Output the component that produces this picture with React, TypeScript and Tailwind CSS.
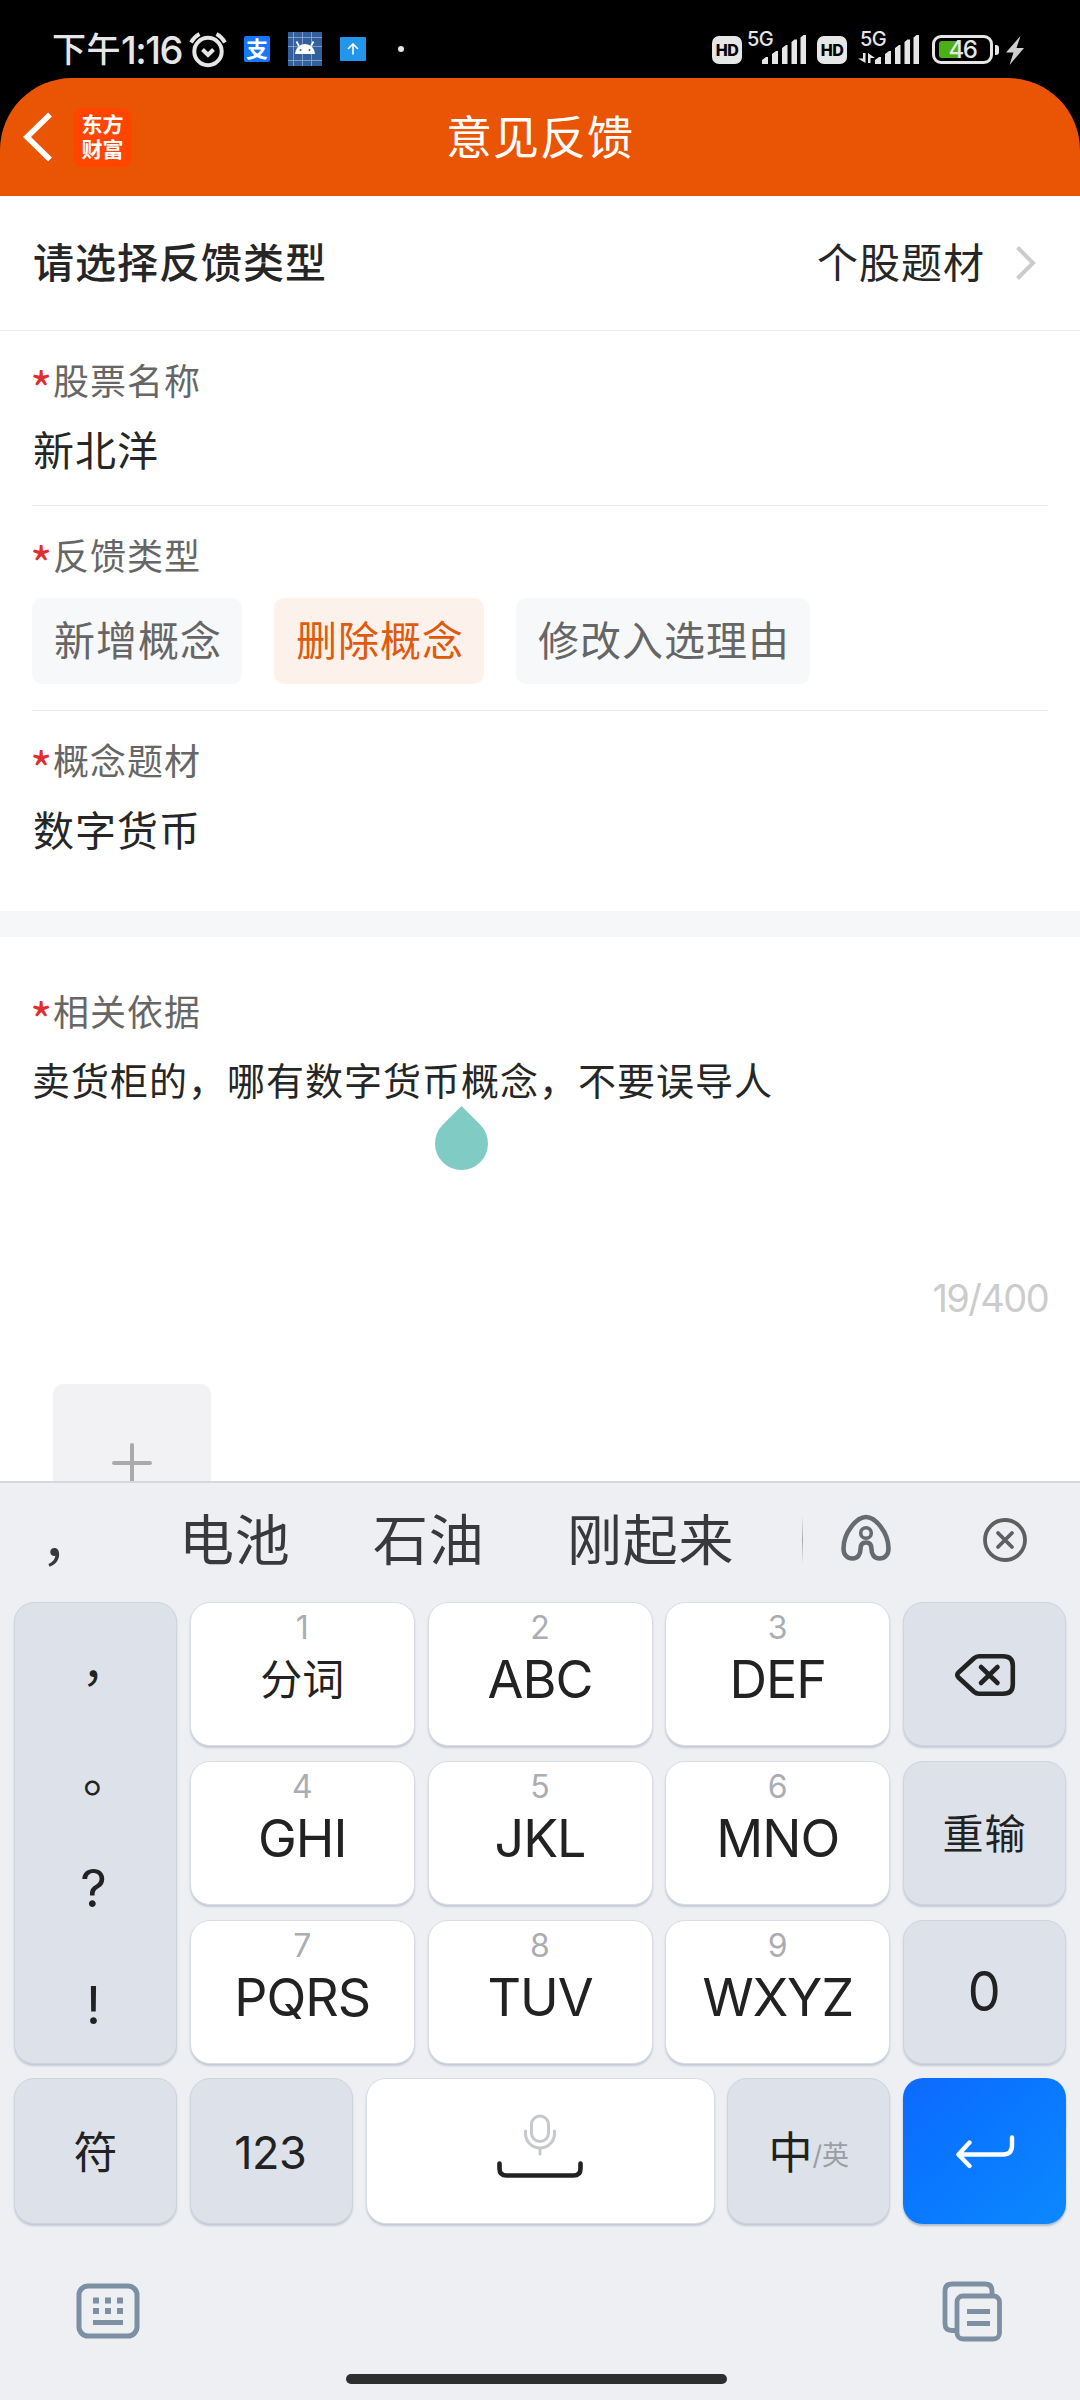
import type { ReactNode } from 'react';
import clsx from 'clsx';

const feedbackTypes = ['新增概念', '删除概念', '修改入选理由'];

const letterKeys = [
  { digit: '1', label: '分词' },
  { digit: '2', label: 'ABC' },
  { digit: '3', label: 'DEF' },
  { digit: '4', label: 'GHI' },
  { digit: '5', label: 'JKL' },
  { digit: '6', label: 'MNO' },
  { digit: '7', label: 'PQRS' },
  { digit: '8', label: 'TUV' },
  { digit: '9', label: 'WXYZ' },
];

function HdBadge({ className }: { className?: string }) {
  return (
    <div
      className={clsx(
        'flex h-[28px] w-[30px] items-center justify-center rounded-[7px] bg-[#e6e6e6] text-[16px] leading-none font-extrabold tracking-[-0.500px] text-black',
        className
      )}
    >
      HD
    </div>
  );
}

function Signal({ data, className }: { data?: boolean; className?: string }) {
  return (
    <div className={clsx('relative h-[34px] w-[62px]', className)}>
      <span className="absolute top-[-2px] left-[-1px] text-[20px] leading-[22px] font-medium tracking-[-0.500px] text-[#e6e6e6]">
        5G
      </span>
      <svg className="absolute inset-0 overflow-visible" width="62" height="34" viewBox="0 0 62 34" fill="#e6e6e6">
        {data && <path d="M2 23h2.500v10L-3 28.500h5zM7 33V23l7 5H9.500v5z" />}
        <path d="M14 34v-4l4-3h2v7zM24 34V24l4-3h2v13zM34 34V18l4-3h1.500v19zM43.500 34V12l3-2.500h2.500V34zM52.500 34V7.500l3-2.500h2.500V34z" />
      </svg>
    </div>
  );
}

function StatusBar() {
  return (
    <div className="flex h-[78px] items-start bg-black pt-[30px] pl-[52px] text-[#e6e6e6]">
      <div className="flex h-[40px] w-[136px] items-center leading-[40px] font-medium whitespace-nowrap">
        <span className="text-[34px] tracking-[0.5px]">下午</span>
        <span className="text-[38px] tracking-[-1.5px]">1:16</span>
      </div>
      <svg className="mt-[1px] ml-[1px]" width="38" height="38" viewBox="0 0 38 38" fill="none" stroke="#e6e6e6">
        <circle cx="19" cy="20.500" r="13.700" strokeWidth="4" />
        <path d="M13.500 18.500l5.500 5.500 5.500-5.500" strokeWidth="4" />
        <path d="M2 11.500Q5 6 10.500 3M36 11.500Q33 6 27.500 3" strokeWidth="3.800" />
      </svg>
      <div className="mt-[6px] ml-[17px] flex size-[26px] items-center justify-center rounded-[2px] bg-[#1677ff] text-[22px] leading-none font-bold text-white">
        支
      </div>
      <svg className="mt-[2px] ml-[18px]" width="34" height="34" viewBox="0 0 34 34">
        <rect width="34" height="34" fill="#33609c" />
        <path d="M5.500 0v34M14.500 0v34M23.500 0v34M0 5.500h34M0 14.500h34M0 28.500h34" stroke="#8fabd0" strokeWidth="0.800" />
        <path d="M7 22a10 10 0 0 1 20 0z" fill="#fff" />
        <path d="M11 14L8.500 9.500M23 14l2.500-4.500" stroke="#fff" strokeWidth="1.800" />
        <circle cx="12.500" cy="18" r="1" fill="#33609c" />
        <circle cx="21.500" cy="18" r="1" fill="#33609c" />
      </svg>
      <svg className="mt-[7px] ml-[18px]" width="26" height="24" viewBox="0 0 26 24">
        <rect width="26" height="24" rx="1" fill="#2196eb" />
        <path d="M13 17.500V7.500M8 12l5-5 5 5" stroke="#fff" strokeWidth="1.600" fill="none" />
      </svg>
      <div className="mt-[16px] ml-[32px] size-[6px] rounded-full bg-[#e6e6e6]" />

      <HdBadge className="mt-[6px] ml-[308px]" />
      <Signal className="ml-[6px]" />
      <HdBadge className="mt-[6px] ml-[7px]" />
      <Signal data className="ml-[14px]" />
      <div className="relative mt-[5px] ml-[9px] h-[29px] w-[61px] rounded-[9px] border-[3px] border-[#e6e6e6]">
        <div className="absolute top-[3px] left-[4px] h-[17px] w-[21px] rounded-l-[3px] bg-[#4caf17]" />
        <div className="absolute inset-0 flex items-center justify-center text-[24px] leading-none font-medium tracking-[-1.500px]">
          46
        </div>
      </div>
      <div className="mt-[15px] ml-[2px] h-[10px] w-[4px] rounded-r-[3px] bg-[#e6e6e6]" />
      <svg className="mt-[6px] ml-[6px]" width="20" height="29" viewBox="0 0 20 29" fill="#cfcfcf">
        <path d="M15.500 0L1 16.500h7.500L4.500 29 19 12h-7.500z" />
      </svg>
    </div>
  );
}

function Header() {
  return (
    <div className="bg-black">
      <div className="grid h-[118px] grid-cols-[1fr_auto_1fr] items-center rounded-t-[72px] bg-[#e95504]">
        <div className="flex items-center">
          <svg className="ml-[20px]" width="34" height="52" viewBox="0 0 34 52" fill="none" stroke="#fff" strokeWidth="5.500">
            <path d="M30 3.500L7 26l23 22.500" />
          </svg>
          <div className="ml-[19px] flex size-[59px] flex-col items-center justify-center rounded-[10px] bg-[#ff4500] text-[21px] leading-[25px] font-bold text-white">
            <span>东方</span>
            <span>财富</span>
          </div>
        </div>
        <h1 className="text-[46px] leading-[60px] tracking-[1px] text-white">意见反馈</h1>
      </div>
    </div>
  );
}

function Label({ children }: { children: ReactNode }) {
  return (
    <div className="flex h-[50px] items-center text-[36px] leading-[50px] tracking-[1px] text-[#666]">
      <span className="ml-[-2px] w-[23px] pt-[9px] font-['Noto_Sans_CJK_SC',sans-serif] text-[48px] text-[#e02d2d]">*</span>
      {children}
    </div>
  );
}

function Value({ children }: { children: ReactNode }) {
  return <div className="mt-[16px] ml-px h-[56px] text-[41px] leading-[57px] tracking-[1px]">{children}</div>;
}

function FeedbackForm() {
  return (
    <main className="h-[1285px] overflow-hidden bg-white text-[#262626]">
      <div className="flex h-[135px] items-center border-b border-[#ebebeb] pt-[2px] pl-[33px] text-[41px] tracking-[1px]">
        <span className="flex-1 font-medium">请选择反馈类型</span>
        <span>个股题材</span>
        <svg className="mt-[-2px] mr-[43px] ml-[30px]" width="22" height="36" viewBox="0 0 22 36" fill="none" stroke="#ccc" strokeWidth="4">
          <path d="M2.500 2.500L18 18 2.500 33.500" />
        </svg>
      </div>

      <div className="px-[32px]">
        <section className="border-b border-[#ebebeb] pt-[26px] pb-[26px]">
          <Label>股票名称</Label>
          <Value>新北洋</Value>
        </section>
        <section className="border-b border-[#ebebeb] pt-[26px] pb-[26px]">
          <Label>反馈类型</Label>
          <div className="mt-[16px] flex gap-[32px] text-[41px] tracking-[1px]">
            {feedbackTypes.map((type) => (
              <button
                key={type}
                className={clsx(
                  'h-[86px] rounded-[10px] pt-[2px] pr-[20px] pl-[22px]',
                  type === '删除概念' ? 'bg-[#fdf1eb] text-[#e0590c]' : 'bg-[#f7f8fa] text-[#666]'
                )}
              >
                {type}
              </button>
            ))}
          </div>
        </section>
        <section className="pt-[26px] pb-[52px]">
          <Label>概念题材</Label>
          <Value>数字货币</Value>
        </section>
      </div>

      <div className="h-[26px] bg-[#f6f7f9]" />

      <section className="px-[32px] pt-[51px]">
        <Label>相关依据</Label>
        <div className="relative mt-[18px] h-[50px] text-[38px] leading-[50px] tracking-[1px]">
          卖货柜的，哪有数字货币概念，不要误导人
          {/* Text cursor handle */}
          <div className="absolute top-[61px] left-[403px] size-[53px] rotate-45 rounded-full rounded-tl-none bg-[#80cbc4]" />
        </div>
        <div className="mt-[172px] h-[40px] text-right text-[38px] leading-[40px] tracking-[-1.600px] text-[#ccc]">19/400</div>
        <div className="mt-[66px] ml-[21px] flex size-[158px] items-center justify-center rounded-[10px] bg-[#f2f2f4]">
          <svg width="42" height="42" viewBox="0 0 42 42" stroke="#aaa" strokeWidth="4" strokeLinecap="round">
            <path d="M21 3v36M3 21h36" />
          </svg>
        </div>
      </section>
    </main>
  );
}

function Key({ grey, className, children }: { grey?: boolean; className?: string; children: ReactNode }) {
  return (
    <button
      className={clsx(
        'flex items-center justify-center rounded-[20px] border shadow-[0_2px_2px_rgba(120,135,160,0.35)]',
        grey ? 'border-[#cfd5dc] bg-[#dde2ea]' : 'border-[#dadde3] bg-white',
        className
      )}
    >
      {children}
    </button>
  );
}

function LetterKey({ digit, label }: { digit: string; label: string }) {
  return (
    <Key className="flex-col">
      <span className="mt-[-26px] text-[32px] leading-[36px] text-[#aaadb2]">{digit}</span>
      <span className={clsx('mt-[2px] leading-[64px]', digit === '1' ? 'text-[42px]' : 'text-[52px] tracking-[-1px]')}>
        {label}
      </span>
    </Key>
  );
}

function Candidates() {
  return (
    <div className="flex h-[119px] items-center pb-[6px] text-[55px] leading-[80px] tracking-[0.800px] text-[#38393d]">
      <span className="ml-[41px] w-[138px]">，</span>
      <span className="w-[194px]">电池</span>
      <span className="w-[194px]">石油</span>
      <span className="w-[235px]">刚起来</span>
      <div className="h-[48px] w-px bg-linear-to-b from-transparent via-[#a5a8ad] to-transparent" />
      <svg className="mt-[-3px] ml-[37px]" width="52" height="50" viewBox="0 0 52 50" fill="none" stroke="#666a71" strokeWidth="4.600">
        <path d="M26 4C35 4 48.500 19 48.500 35.500C48.500 42 44.500 45.500 39.500 45.500C34 45.500 31.500 41 31.500 36C31.500 31.500 29.500 29.500 26 29.500S20.500 31.500 20.500 36C20.500 41 18 45.500 12.500 45.500C7.500 45.500 3.500 42 3.500 35.500C3.500 19 17 4 26 4Z" />
        <circle cx="26" cy="20" r="5.300" strokeWidth="3.600" />
      </svg>
      <svg className="ml-[90px]" width="46" height="46" viewBox="0 0 46 46" fill="none" stroke="#5f5f5f" strokeWidth="3.800" strokeLinecap="round">
        <circle cx="23" cy="23" r="20" />
        <path d="M16 16l14 14M30 16L16 30" />
      </svg>
    </div>
  );
}

function Keyboard() {
  return (
    <div className="h-[919px] border-t-2 border-[#d5d7db] bg-[#edeff3] text-[#222]">
      <Candidates />

      <div className="grid grid-cols-[163px_225px_225px_225px_163px] grid-rows-[144px_144px_144px] gap-x-[12.75px] gap-y-[15px] pl-[14px]">
        <Key grey className="row-span-3 flex-col text-[48px] leading-[60px]">
          <span className="mt-[4px] h-[111px] pl-[20px]">，</span>
          <span className="h-[94px] pl-[23px]">。</span>
          <span className="h-[117px] pt-[20px] pr-[4px] text-[52px]">?</span>
          <span className="pt-[20px] pr-[4px] text-[52px]">!</span>
        </Key>
        {letterKeys.slice(0, 3).map((k) => (
          <LetterKey key={k.digit} {...k} />
        ))}
        <Key grey>
          <svg className="mt-[2px]" width="62" height="44" viewBox="0 0 62 44" fill="none" stroke="#222" strokeWidth="4.600" strokeLinecap="round" strokeLinejoin="round">
            <path d="M25 3.300H49C55.500 3.300 58.800 6.500 58.800 12.500V31.500C58.800 37.500 55.500 40.700 49 40.700H25C23 40.700 21.500 40 20 38.700L4.500 24.500C2.800 22.900 2.800 21.100 4.500 19.500L20 5.300C21.500 4 23 3.300 25 3.300Z" />
            <path d="M27 14l16.500 16M43.500 14L27 30" />
          </svg>
        </Key>
        {letterKeys.slice(3, 6).map((k) => (
          <LetterKey key={k.digit} {...k} />
        ))}
        <Key grey className="pt-[4px] text-[41px] tracking-[1px]">
          重输
        </Key>
        {letterKeys.slice(6).map((k) => (
          <LetterKey key={k.digit} {...k} />
        ))}
        <Key grey className="text-[55px]">
          <span className="mt-[-2px] scale-x-95">0</span>
        </Key>
      </div>

      <div className="mt-[14px] flex h-[146px] gap-[12.75px] pr-[14px] pl-[14px]">
        <Key grey className="w-[163px] pt-[4px] text-[44px]">
          符
        </Key>
        <Key grey className="w-[163px] pt-[3px] pr-[2px] text-[45px] tracking-[-0.500px]">
          123
        </Key>
        <Key className="flex-1">
          <svg className="mt-[-6px]" width="90" height="70" viewBox="0 0 90 70" fill="none" strokeLinecap="round">
            <g stroke="#c5c8cc" strokeWidth="3">
              <rect x="36.500" y="3" width="17" height="25.500" rx="8.500" />
              <path d="M30.500 18v2.500a14.500 14.500 0 0 0 29 0V18M45 36v5" />
            </g>
            <path d="M4.500 50.500v5q0 7 7 7h67q7 0 7-7v-5" stroke="#222" strokeWidth="4.600" />
          </svg>
        </Key>
        <Key grey className="w-[163px] pt-[4px]">
          <span className="text-[44px]">中</span>
          <span className="pt-[6px] text-[27px] text-[#9b9fa5]">/英</span>
        </Key>
        <button className="flex w-[163px] items-center justify-center rounded-[20px] bg-linear-to-br from-[#0d69ff] to-[#0d88ff] shadow-[0_2px_2px_rgba(120,135,160,0.5)]">
          <svg width="62" height="36" viewBox="0 0 62 36" fill="none" stroke="#fff" strokeWidth="4.400" strokeLinecap="round" strokeLinejoin="round">
            <path d="M15.500 9.500L4.500 21.500l11 11.500M5 21.500h44q9 0 9-9V4.500" />
          </svg>
        </button>
      </div>

      <div className="flex items-center justify-between pt-[55px] pr-[76px] pl-[74px]">
        <svg width="68" height="60" viewBox="0 0 68 60" fill="none" stroke="#7d8fa3" strokeWidth="5">
          <rect x="5" y="5" width="58" height="50" rx="9" />
          <path d="M19 19.500h6M31 19.500h6M43 19.500h6M19 30h6M31 30h6M43 30h6" strokeWidth="6" />
          <path d="M19 41.500h30" />
        </svg>
        <svg width="64" height="64" viewBox="0 0 64 64" fill="none" stroke="#7d8fa3" strokeWidth="4.800">
          <path d="M17 51.500h-5q-7 0-7-7V12q0-7 7-7h33q7 0 7 7v5" />
          <rect x="17" y="17" width="42.500" height="43" rx="6" />
          <path d="M27 32.500h23M27 44.500h23" />
        </svg>
      </div>

      <div className="mt-[31px] ml-[346px] h-[10px] w-[381px] rounded-full bg-[#2d2f2f]" />
    </div>
  );
}

export default function App() {
  return (
    <div className="h-[2400px] w-[1080px] overflow-hidden bg-white font-[Inter,'Noto_Sans_CJK_SC',sans-serif]">
      <StatusBar />
      <Header />
      <FeedbackForm />
      <Keyboard />
    </div>
  );
}
